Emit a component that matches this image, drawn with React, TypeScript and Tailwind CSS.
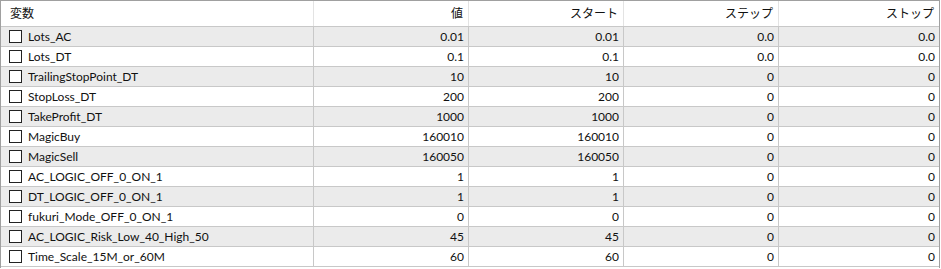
const rows: [string, string, string, string, string][] = [
  ["Lots_AC", "0.01", "0.01", "0.0", "0.0"],
  ["Lots_DT", "0.1", "0.1", "0.0", "0.0"],
  ["TrailingStopPoint_DT", "10", "10", "0", "0"],
  ["StopLoss_DT", "200", "200", "0", "0"],
  ["TakeProfit_DT", "1000", "1000", "0", "0"],
  ["MagicBuy", "160010", "160010", "0", "0"],
  ["MagicSell", "160050", "160050", "0", "0"],
  ["AC_LOGIC_OFF_0_ON_1", "1", "1", "0", "0"],
  ["DT_LOGIC_OFF_0_ON_1", "1", "1", "0", "0"],
  ["fukuri_Mode_OFF_0_ON_1", "0", "0", "0", "0"],
  ["AC_LOGIC_Risk_Low_40_High_50", "45", "45", "0", "0"],
  ["Time_Scale_15M_or_60M", "60", "60", "0", "0"],
];

const headers = ["値", "スタート", "ステップ", "ストップ"];

const cols = "grid grid-cols-[313px_155px_155px_155px_1fr]";

export default function App() {
  return (
    <div
      className="h-[269px] w-[941px] bg-white text-[12px] text-[#111]"
      style={{ fontFamily: 'Lato, "Noto Sans CJK JP", sans-serif' }}
    >
      <div className="h-[268px] w-[940px] border-l border-t border-r border-[#a0a0a0] overflow-hidden">
        <div className={`${cols} h-[26px] border-b border-[#c8c8c8]`}>
          <div className="flex items-center border-r border-[#e3e3e3] pl-[9px]">変数</div>
          {headers.map((h, i) => (
            <div
              key={h}
              className={`flex items-center justify-end pr-[5px] ${i < 3 ? "border-r border-[#e3e3e3]" : ""}`}
            >
              {h}
            </div>
          ))}
        </div>
        {rows.map((r, i) => (
          <div
            key={r[0]}
            className={`${cols} h-[20px] border-b border-[#c8c8c8] ${i % 2 === 0 ? "bg-[#ebebeb]" : "bg-white"}`}
          >
            <div className="flex items-center gap-[6px] border-r border-[#c8c8c8] pl-[8px]">
              <span className="block h-[13px] w-[13px] border border-[#222] bg-white" />
              <span className="leading-none">{r[0]}</span>
            </div>
            {r.slice(1).map((v, j) => (
              <div
                key={j}
                className={`flex items-center justify-end pr-[4px] ${j < 3 ? "border-r border-[#c8c8c8]" : ""}`}
              >
                {v}
              </div>
            ))}
          </div>
        ))}
      </div>
    </div>
  );
}
